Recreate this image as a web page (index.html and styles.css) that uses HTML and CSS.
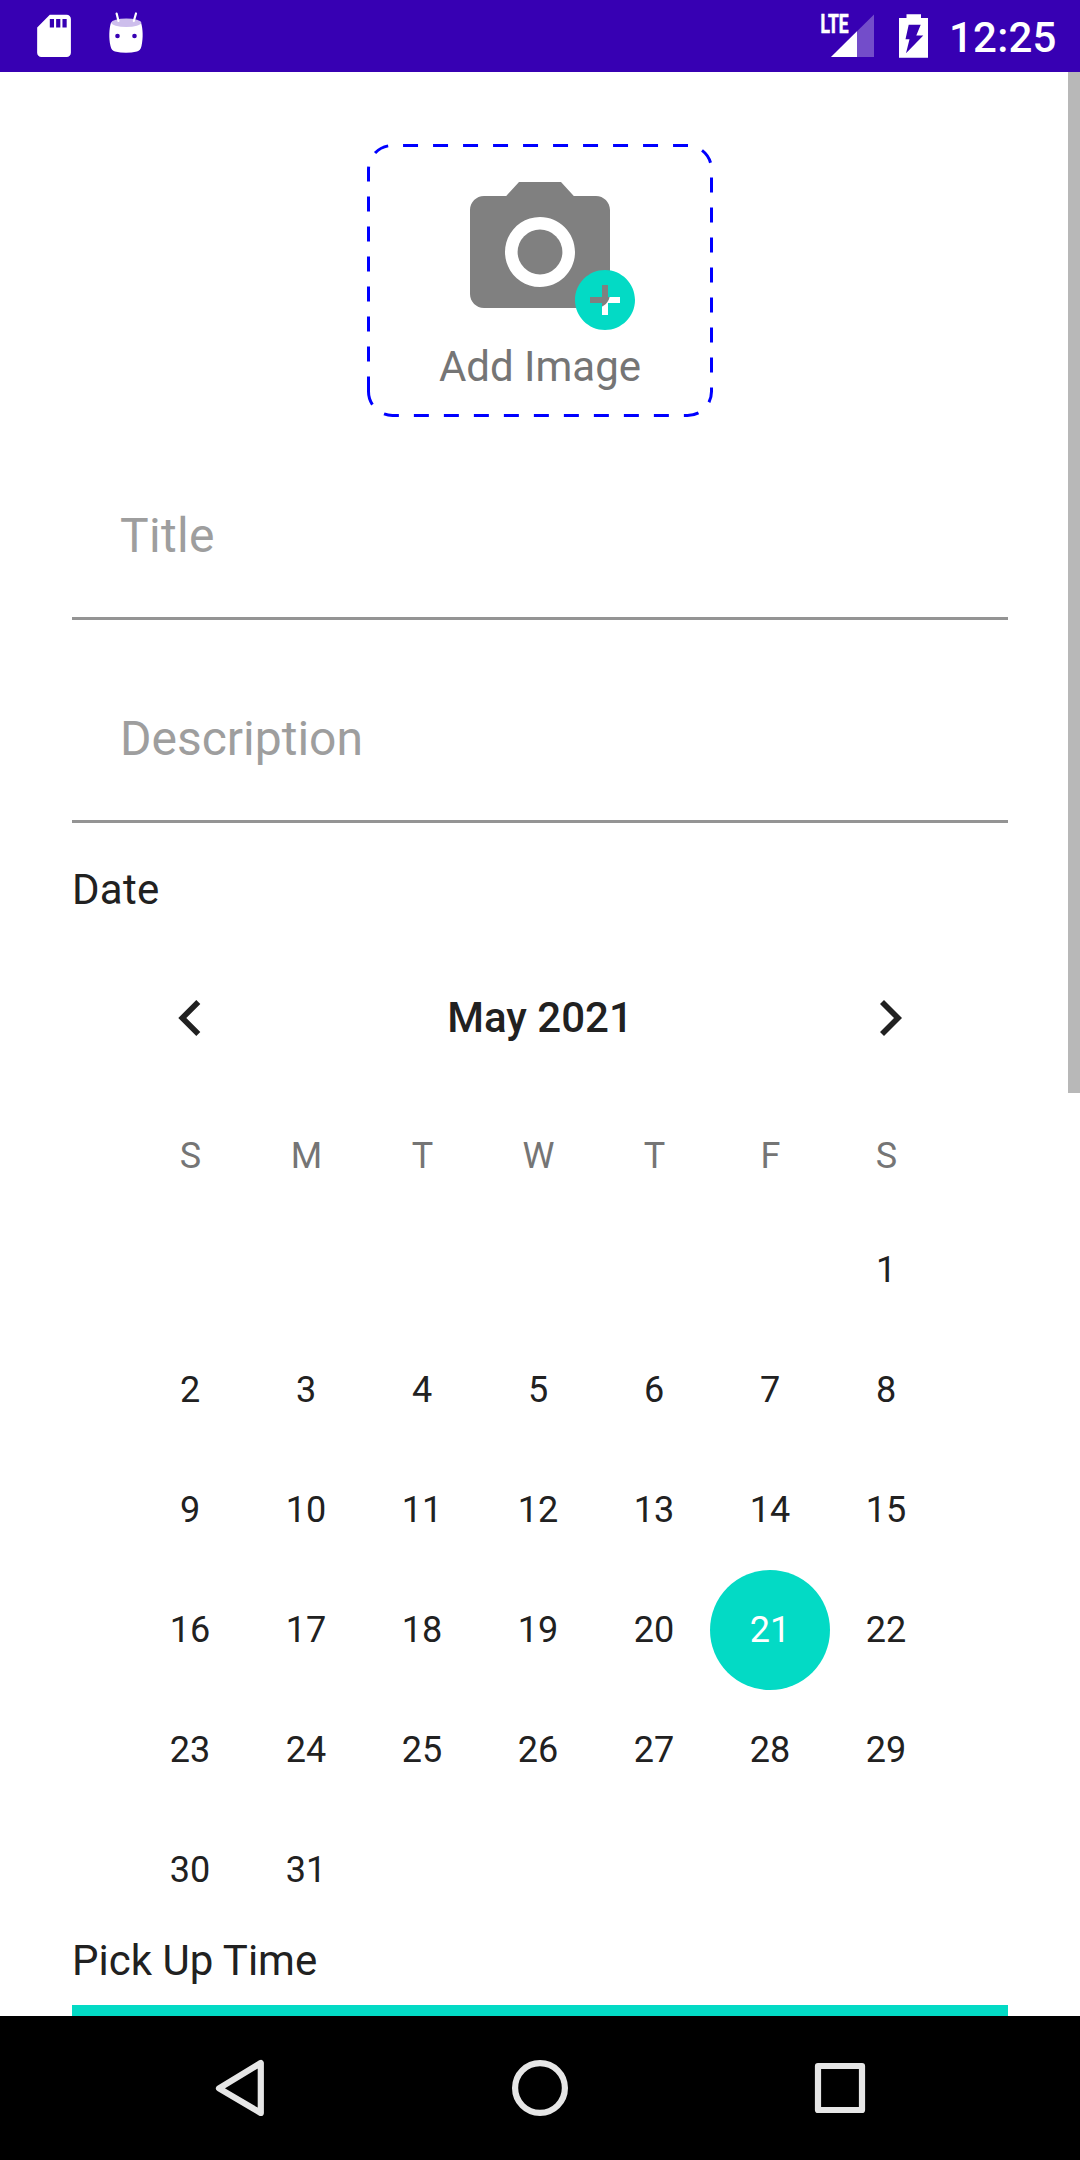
FILE: index.html
```html
<!DOCTYPE html>
<html lang="en">
<head>
<meta charset="utf-8">
<title>Add listing</title>
<link rel="stylesheet" href="styles.css">
</head>
<body>
<div class="screen">
  <header class="status-bar">
    <svg class="status-icon" width="52" height="72" viewBox="28 0 52 72"><path fill="#fff" transform="translate(28.7 10.6) scale(2.11)" d="M18 2h-8L4.02 8 4 20c0 1.1.9 2 2 2h12c1.1 0 2-.9 2-2V4c0-1.1-.9-2-2-2zm-6 6h-2V4h2v4zm3 0h-2V4h2v4zm3 0h-2V4h2v4z"/></svg>
    <svg class="status-icon" width="44" height="72" viewBox="104 0 44 72">
      <path fill="#fff" d="M111 22.5C109 29 108.700 38 110.500 46C111.300 49.300 112.500 50.800 115 51.400Q126 54.200 137 51.400C139.500 50.800 140.700 49.300 141.500 46C143.300 38 143 29 141 22.500Z"/>
      <ellipse cx="126.300" cy="22.800" rx="15" ry="4.200" fill="#cdbeec"/>
      <path d="M116.600 13.500L118.500 21M136 13.500L133.800 21" stroke="#fff" stroke-width="2.200" stroke-linecap="round"/>
      <circle cx="117.500" cy="36" r="2.300" fill="#3700b3"/><circle cx="134.500" cy="36" r="2.300" fill="#3700b3"/>
    </svg>
    <div class="spacer"></div>
    <svg class="status-icon" width="58" height="72" viewBox="818 0 58 72">
      <path d="M874 14.500V57H831Z" fill="#734dca"/>
      <path d="M857 31.300V57H831Z" fill="#fff"/>
      <text class="network" x="820.500" y="33.200" textLength="28" lengthAdjust="spacingAndGlyphs">LTE</text>
    </svg>
    <svg class="status-icon battery" width="30" height="72" viewBox="899 0 30 72"><path fill="#fff" fill-rule="evenodd" d="M906.500 14.200H921V18H928V57.700H899V18H906.500ZM908.700 24.700L905.500 39.300H909.500L906 53.300L923.300 35.500H916.300L920.700 24.700Z"/></svg>
    <span class="clock">12:25</span>
  </header>

  <main class="content">
    <button class="add-image">
      <svg class="add-frame" width="346" height="273" viewBox="367 144 346 273"><path d="M368.500 391.500V169.500A24 24 0 0 1 392.500 145.500H687.500A24 24 0 0 1 711.500 169.500V391.500A24 24 0 0 1 687.500 415.500H392.500A24 24 0 0 1 368.500 391.500" fill="none" stroke="#00f" stroke-width="3" stroke-dasharray="15 15"/></svg>
      <svg class="camera" width="190" height="168" viewBox="0 0 190 168">
        <g fill="#808080" transform="scale(7)"><circle cx="12" cy="12" r="3.200"/><path d="M9 2L7.170 4H4c-1.100 0-2 .9-2 2v12c0 1.100.9 2 2 2h16c1.100 0 2-.9 2-2V6c0-1.100-.9-2-2-2h-3.170L15 2H9zm3 15c-2.760 0-5-2.240-5-5s2.240-5 5-5 5 2.240 5 5-2.240 5-5 5z"/></g>
        <path fill="#03dac5" transform="translate(113 96) scale(3)" d="M12 2C6.480 2 2 6.480 2 12s4.480 10 10 10 10-4.480 10-10S17.520 2 12 2zm5 11h-4v4h-2v-4H7v-2h4V7h2v4h4v2z"/>
      </svg>
      <span class="add-label">Add Image</span>
    </button>

    <div class="field field-title">Title</div>
    <div class="field">Description</div>

    <h2 class="section-label date-label">Date</h2>

    <section class="calendar">
      <div class="month-bar">
        <svg width="116" height="60" viewBox="132 988 116 60"><path fill="#212121" d="M178.300 1018L196.300 1000L200.300 1004L186.300 1018L200.300 1032L196.300 1036Z"/></svg>
        <span class="month">May 2021</span>
        <svg width="116" height="60" viewBox="832 988 116 60"><path fill="#212121" d="M902 1018L884 1000L880 1004L894 1018L880 1032L884 1036Z"/></svg>
      </div>
      <div class="weekdays"><span>S</span><span>M</span><span>T</span><span>W</span><span>T</span><span>F</span><span>S</span></div>
      <div class="days">
        <span class="first">1</span>
        <span>2</span><span>3</span><span>4</span><span>5</span><span>6</span><span>7</span><span>8</span>
        <span>9</span><span>10</span><span>11</span><span>12</span><span>13</span><span>14</span><span>15</span>
        <span>16</span><span>17</span><span>18</span><span>19</span><span>20</span><span class="selected">21</span><span>22</span>
        <span>23</span><span>24</span><span>25</span><span>26</span><span>27</span><span>28</span><span>29</span>
        <span>30</span><span>31</span>
      </div>
    </section>

    <h2 class="section-label time-label">Pick Up Time</h2>
    <div class="time-header"></div>
    <div class="scrollbar"></div>
  </main>

  <nav class="nav-bar">
    <svg width="60" height="60" viewBox="210 2058 60 60"><path d="M219 2088.300L260.800 2063V2113Z"/></svg>
    <svg width="60" height="60" viewBox="510 2058 60 60"><circle cx="540" cy="2088" r="24.900"/></svg>
    <svg width="60" height="60" viewBox="810 2058 60 60"><rect x="818" y="2066" width="44" height="44"/></svg>
  </nav>
</div>
</body>
</html>
```
FILE: styles.css
```css
* { box-sizing: border-box; }
body {
  margin: 0;
  background: #fff;
  color: #212121;
  font-family: Roboto, "Noto Sans", sans-serif;
}
.screen {
  width: 1080px;
  height: 2160px;
  display: flex;
  flex-direction: column;
  overflow: hidden;
}
.status-bar {
  flex: none;
  height: 72px;
  padding: 0 24px 0 28px;
  display: flex;
  gap: 24px;
  background: #3700b3;
  color: #fff;
}
.status-icon { flex: none; display: block; }
.spacer { flex: 1; }
.network {
  font-size: 26px;
  font-weight: 700;
  fill: #fff;
  stroke: #fff;
  stroke-width: 0.7;
}
.battery { margin-left: -1px; }
.clock {
  width: 107px;
  margin-left: -4px;
  font-size: 42px;
  font-weight: 500;
  line-height: 75px;
  letter-spacing: 0.2px;
  text-align: right;
  white-space: nowrap;
}
.content {
  flex: none;
  position: relative;
  height: 1944px;
  padding: 72px 72px 0;
  overflow: hidden;
}
.add-image {
  position: relative;
  display: flex;
  flex-direction: column;
  align-items: center;
  width: 346px;
  height: 273px;
  margin: 0 auto;
  padding: 24px 0 0;
  border: 0;
  background: none;
  font-family: inherit;
}
.add-frame { position: absolute; inset: 0; }
.camera { flex: none; margin-left: 22px; }
.add-label {
  margin-top: 6px;
  font-size: 42px;
  line-height: 50px;
  color: #757575;
}
.field {
  height: 143px;
  margin-top: 60px;
  padding-left: 48px;
  border-bottom: 3px solid #949494;
  font-size: 48px;
  line-height: 117px;
  color: #9e9e9e;
}
.field-title { letter-spacing: 0.3px; }
.section-label {
  margin: 40px 0 0;
  font-size: 42px;
  font-weight: 400;
  line-height: 54px;
}
.date-label { letter-spacing: 0.3px; }
.calendar { padding: 71px 60px 0; }
.month-bar {
  display: flex;
  align-items: center;
  justify-content: space-between;
  height: 60px;
}
.month {
  padding-bottom: 2px;
  font-size: 42px;
  font-weight: 500;
}
.weekdays, .days {
  display: grid;
  grid-template-columns: repeat(7, 116px);
  text-align: center;
  font-size: 36px;
}
.weekdays {
  margin-top: 77px;
  padding-left: 0.5px;
  line-height: 62px;
  color: #757575;
}
.days {
  grid-auto-rows: 120px;
  margin-top: 23px;
  line-height: 120px;
}
.first { grid-column: 7; }
.selected {
  width: 120px;
  margin-left: -2px;
  border-radius: 50%;
  background: #03dac5;
  color: #fff;
}
.section-label.time-label { margin-top: 4px; }
.time-header { height: 60px; margin-top: 17px; background: #03dac5; }
.scrollbar {
  position: absolute;
  top: 0;
  right: 0;
  width: 12px;
  height: 1021px;
  background: #b8b8b8;
}
.nav-bar {
  flex: none;
  display: flex;
  align-items: center;
  justify-content: space-between;
  height: 144px;
  padding: 0 210px;
  background: #000;
}
.nav-bar svg {
  fill: none;
  stroke: #e6e6e6;
  stroke-width: 6.2;
  stroke-linejoin: round;
}
```
